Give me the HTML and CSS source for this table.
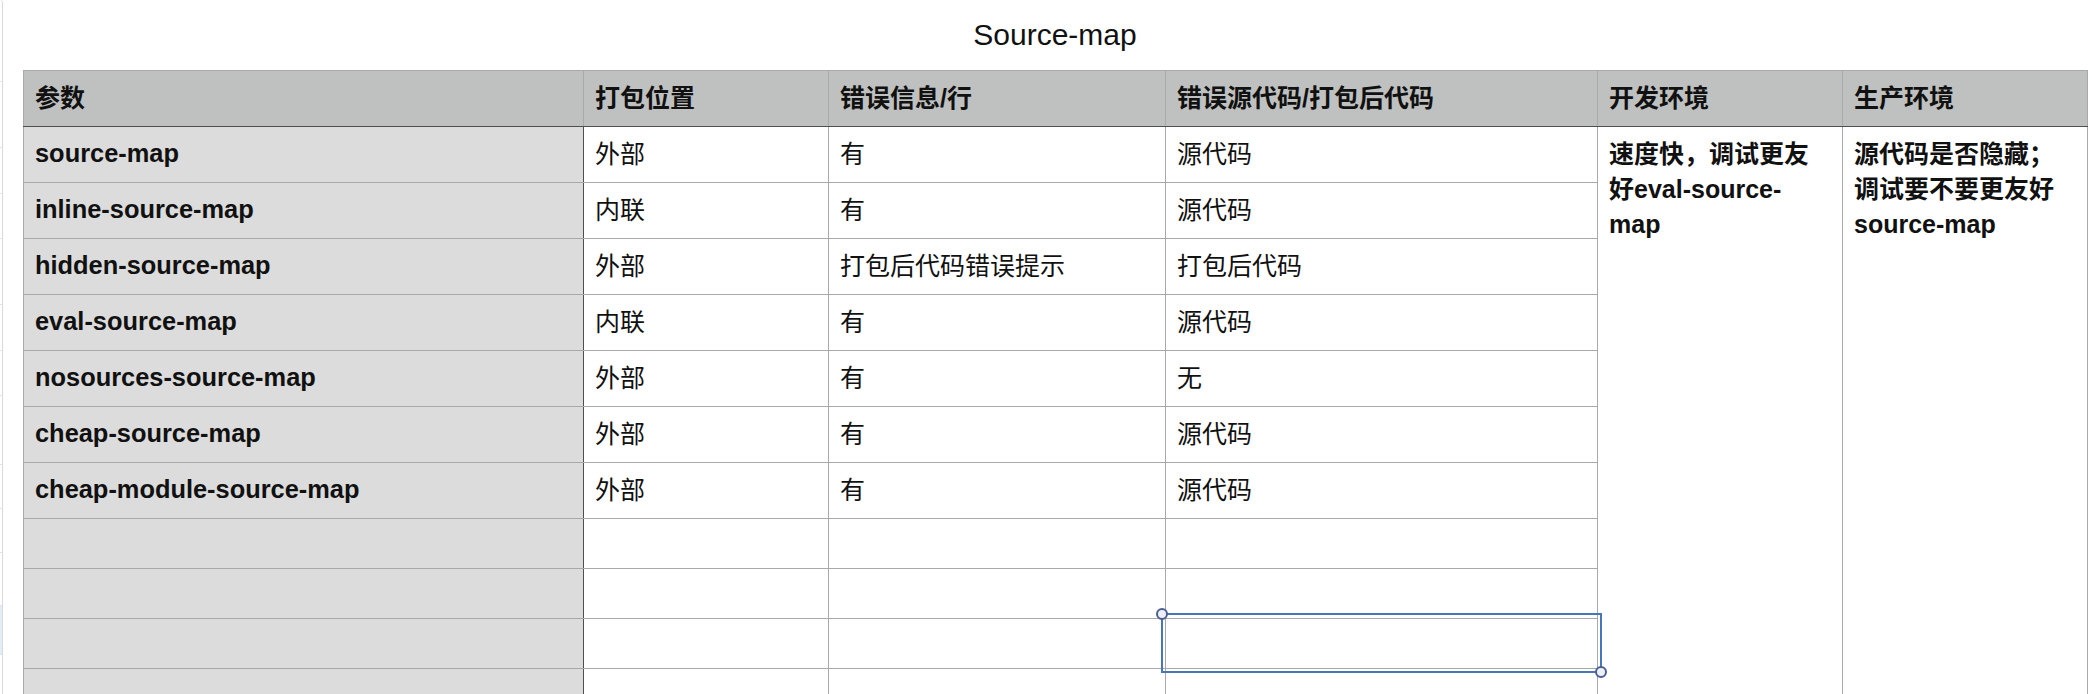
FILE: index.html
```html
<!DOCTYPE html>
<html lang="zh-CN">
<head>
<meta charset="utf-8">
<title>Source-map</title>
<link rel="stylesheet" href="styles.css">
</head>
<body>
<div class="page">
  <aside class="sidebar">
    <div class="side-item" style="height:82px"></div>
    <div class="side-item" style="height:66px"></div>
    <div class="side-item" style="height:46px"></div>
    <div class="side-item" style="height:45px"></div>
    <div class="side-item" style="height:66px"></div>
    <div class="side-item" style="height:46px"></div>
    <div class="side-item" style="height:45px"></div>
    <div class="side-item" style="height:69px"></div>
    <div class="side-item" style="height:44px"></div>
    <div class="side-item" style="height:44px"></div>
    <div class="side-item" style="height:53px"></div>
    <div class="side-item active" style="height:49px"></div>
  </aside>
  <main class="sheet">
    <h1 class="title">Source-map</h1>
    <div class="table-wrap">
      <table class="grid">
        <colgroup>
          <col class="c1"><col class="c2"><col class="c3"><col class="c4"><col class="c5"><col class="c6">
        </colgroup>
        <thead>
          <tr class="row">
            <th class="hcol">参数</th>
            <th>打包位置</th>
            <th>错误信息/行</th>
            <th>错误源代码/打包后代码</th>
            <th>开发环境</th>
            <th>生产环境</th>
          </tr>
        </thead>
        <tbody>
          <tr class="row">
            <td class="key">source-map</td>
            <td>外部</td>
            <td>有</td>
            <td>源代码</td>
            <td class="merged" rowspan="11">速度快，调试更友<br>好eval-source-<br>map</td>
            <td class="merged" rowspan="11">源代码是否隐藏；<br>调试要不要更友好<br>source-map</td>
          </tr>
          <tr class="row">
            <td class="key">inline-source-map</td>
            <td>内联</td>
            <td>有</td>
            <td>源代码</td>
          </tr>
          <tr class="row">
            <td class="key">hidden-source-map</td>
            <td>外部</td>
            <td>打包后代码错误提示</td>
            <td>打包后代码</td>
          </tr>
          <tr class="row">
            <td class="key">eval-source-map</td>
            <td>内联</td>
            <td>有</td>
            <td>源代码</td>
          </tr>
          <tr class="row">
            <td class="key">nosources-source-map</td>
            <td>外部</td>
            <td>有</td>
            <td>无</td>
          </tr>
          <tr class="row">
            <td class="key">cheap-source-map</td>
            <td>外部</td>
            <td>有</td>
            <td>源代码</td>
          </tr>
          <tr class="row">
            <td class="key">cheap-module-source-map</td>
            <td>外部</td>
            <td>有</td>
            <td>源代码</td>
          </tr>
          <tr class="row empty"><td class="key"></td><td></td><td></td><td></td></tr>
          <tr class="row empty"><td class="key"></td><td></td><td></td><td></td></tr>
          <tr class="row empty"><td class="key"></td><td></td><td></td><td></td></tr>
          <tr class="row empty"><td class="key"></td><td></td><td></td><td></td></tr>
        </tbody>
      </table>
      <div class="selection">
        <span class="handle handle-tl"></span>
        <span class="handle handle-br"></span>
      </div>
    </div>
  </main>
</div>
</body>
</html>
```

FILE: styles.css
```css
html, body {
  margin: 0;
  padding: 0;
  height: 694px;
  overflow: hidden;
  background: #ffffff;
}

body {
  font-family: "Liberation Sans", "Noto Sans CJK SC", sans-serif;
  color: #111111;
}

.page {
  display: flex;
  height: 694px;
}

.sidebar {
  width: 2px;
  flex: 0 0 2px;
  border-right: 1px solid #d9d9d9;
  border-top-right-radius: 8px;
  display: flex;
  flex-direction: column;
  overflow: hidden;
}

.side-item {
  flex: 0 0 auto;
  border-bottom: 1px solid #e6e6e6;
  box-sizing: border-box;
}

.side-item.active {
  background: #e3ecf9;
}

.sheet {
  flex: 1;
  padding-left: 20px;
  min-width: 0;
}

.title {
  margin: 0;
  width: 2064px;
  height: 70px;
  box-sizing: border-box;
  padding-top: 17px;
  text-align: center;
  font-size: 30px;
  line-height: 35px;
  font-weight: 400;
  color: #111111;
}

.table-wrap {
  position: relative;
  width: 2064px;
}

.grid {
  border-collapse: collapse;
  table-layout: fixed;
  width: 2064px;
  font-size: 25px;
  line-height: 35px;
}

.c1 { width: 560px; }
.c2 { width: 245px; }
.c3 { width: 337px; }
.c4 { width: 432px; }
.c5 { width: 245px; }
.c6 { width: 245px; }

.grid th,
.grid td {
  border: 1px solid #a9a9a9;
  padding: 10px 11px 10px 11px;
  vertical-align: top;
  text-align: left;
  white-space: nowrap;
  overflow: hidden;
}

.row {
  height: 56px;
}

.row.empty {
  height: 50px;
}

.grid th {
  background: #bfc1c0;
  font-weight: 700;
  border-bottom: 1px solid #4f4f4f;
}

.grid td.key {
  background: #dcdcdc;
  font-weight: 700;
  font-size: 25.4px;
  padding-top: 9px;
  padding-bottom: 11px;
  border-right: 1px solid #4f4f4f;
}

.grid td.merged {
  font-weight: 700;
}

.selection {
  position: absolute;
  left: 1138px;
  top: 543px;
  width: 441px;
  height: 60px;
  box-sizing: border-box;
  border: 2px solid #4877b9;
}

.handle {
  position: absolute;
  width: 12px;
  height: 12px;
  box-sizing: border-box;
  border: 2px solid #4b5e94;
  border-radius: 50%;
  background: #eef0f8;
}

.handle-tl {
  left: -7px;
  top: -7px;
}

.handle-br {
  right: -7px;
  bottom: -7px;
}
```
